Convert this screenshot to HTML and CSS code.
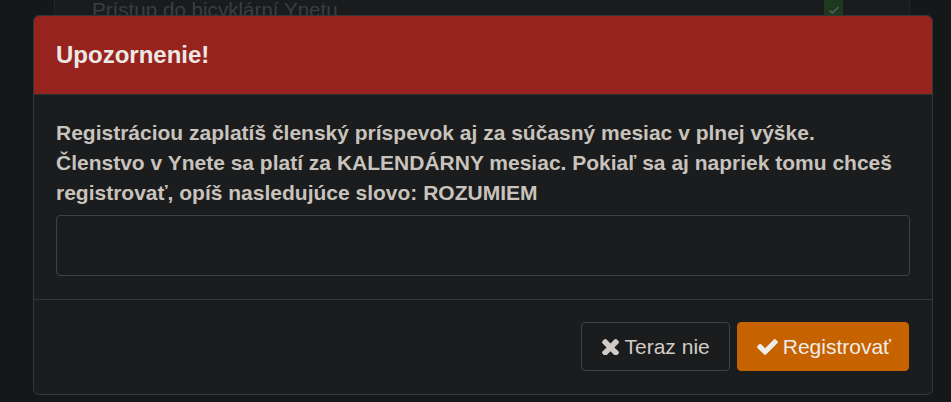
FILE: index.html
```html
<!DOCTYPE html>
<html lang="sk">
<head>
    <meta charset="UTF-8">
    <meta name="viewport" content="width=device-width, initial-scale=1.0">
    <title>Registrácia</title>
    <link rel="stylesheet" href="styles.css">
</head>
<body>
    <div class="page">
        <div class="panel">
            <div class="perk-row">
                <span class="perk-name">Prístup do bicyklární Ynetu</span>
                <span class="perk-check">
                    <svg viewBox="0 0 16 16" width="14" height="14"><path d="M3 8.5l3 3 7-7" fill="none" stroke="#596060" stroke-width="1.6"/></svg>
                </span>
            </div>
        </div>
    </div>

    <div class="modal">
        <div class="modal-header">
            <h2>Upozornenie!</h2>
        </div>
        <div class="modal-body">
            <p>Registráciou zaplatíš členský príspevok aj za súčasný mesiac v plnej výške.<br>Členstvo v Ynete sa platí za KALENDÁRNY mesiac. Pokiaľ sa aj napriek tomu chceš registrovať, opíš nasledujúce slovo: ROZUMIEM</p>
            <input type="text" class="confirm-input">
        </div>
        <div class="modal-footer">
            <button type="button" class="btn btn-cancel">
                <svg class="icon" viewBox="302 302 1188 1188" width="17" height="17"><path fill="currentColor" d="M1490 1322q0 40-28 68l-136 136q-28 28-68 28t-68-28l-294-294-294 294q-28 28-68 28t-68-28l-136-136q-28-28-28-68t28-68l294-294-294-294q-28-28-28-68t28-68l136-136q28-28 68-28t68 28l294 294 294-294q28-28 68-28t68 28l136 136q28 28 28 68t-28 68l-294 294 294 294q28 28 28 68z"/></svg>
                Teraz nie
            </button>
            <button type="button" class="btn btn-register">
                <svg class="icon" viewBox="121 334 1550 1188" width="21" height="16"><path fill="currentColor" d="M1671 566q0 40-28 68l-724 724-136 136q-28 28-68 28t-68-28l-136-136-362-362q-28-28-28-68t28-68l136-136q28-28 68-28t68 28l294 295 656-657q28-28 68-28t68 28l136 136q28 28 28 68z"/></svg>Registrovať
            </button>
        </div>
    </div>
</body>
</html>
```

FILE: styles.css
```css
body {
    margin: 0;
    font-family: "Liberation Sans", Arial, sans-serif;
    background-color: #151819;
    height: 402px;
    overflow: hidden;
}
.page {
    padding-left: 54px;
    width: 856px;
    height: 100%;
}
.panel {
    background: #191b1d;
    border-left: 1px solid #222628;
    border-right: 1px solid #222628;
    height: 100%;
}
.perk-row {
    display: flex;
    align-items: center;
    justify-content: space-between;
    padding: 0 66px 0 37px;
    height: 36px;
    margin-top: -8px;
}
.perk-name {
    color: #3a3e41;
    font-size: 20.6px;
}
.perk-check {
    display: flex;
    align-items: center;
    justify-content: center;
    width: 19px;
    height: 22px;
    background: #1c3a1e;
}
.modal {
    position: absolute;
    left: 33px;
    top: 15px;
    width: 900px;
    box-sizing: border-box;
    background: #1b1c1e;
    border: 1px solid #33373a;
    border-radius: 6px;
    overflow: hidden;
}
.modal-header {
    background: #97231f;
    height: 78px;
    display: flex;
    align-items: center;
    padding: 0 22px;
    border-bottom: 1px solid #2d3133;
}
.modal-header h2 {
    margin: 0;
    font-size: 24px;
    color: #ece9e5;
}
.modal-body {
    padding: 23px 22px 23px;
}
.modal-body p {
    margin: 0 0 7px;
    font-size: 21px;
    font-weight: bold;
    line-height: 30px;
    color: #c8c3bc;
}
.confirm-input {
    display: block;
    width: 100%;
    height: 61px;
    box-sizing: border-box;
    background: transparent;
    border: 1px solid #3d4245;
    border-radius: 4px;
}
.modal-footer {
    display: flex;
    justify-content: flex-end;
    gap: 7px;
    padding: 22px 23px 23px;
    border-top: 1px solid #33373a;
}
.btn {
    display: flex;
    align-items: center;
    height: 49px;
    font-family: "Liberation Sans", Arial, sans-serif;
    font-size: 21px;
    border-radius: 4px;
    cursor: pointer;
}
.btn-cancel {
    gap: 6px;
    padding: 0 19px 0 20px;
    background: transparent;
    color: #d0ccc5;
    border: 1px solid #3d4245;
}
.btn-register {
    gap: 5px;
    padding: 0 17px 0 19px;
    background: #c66200;
    color: #f0ece8;
    border: 1px solid #c66200;
}
```
